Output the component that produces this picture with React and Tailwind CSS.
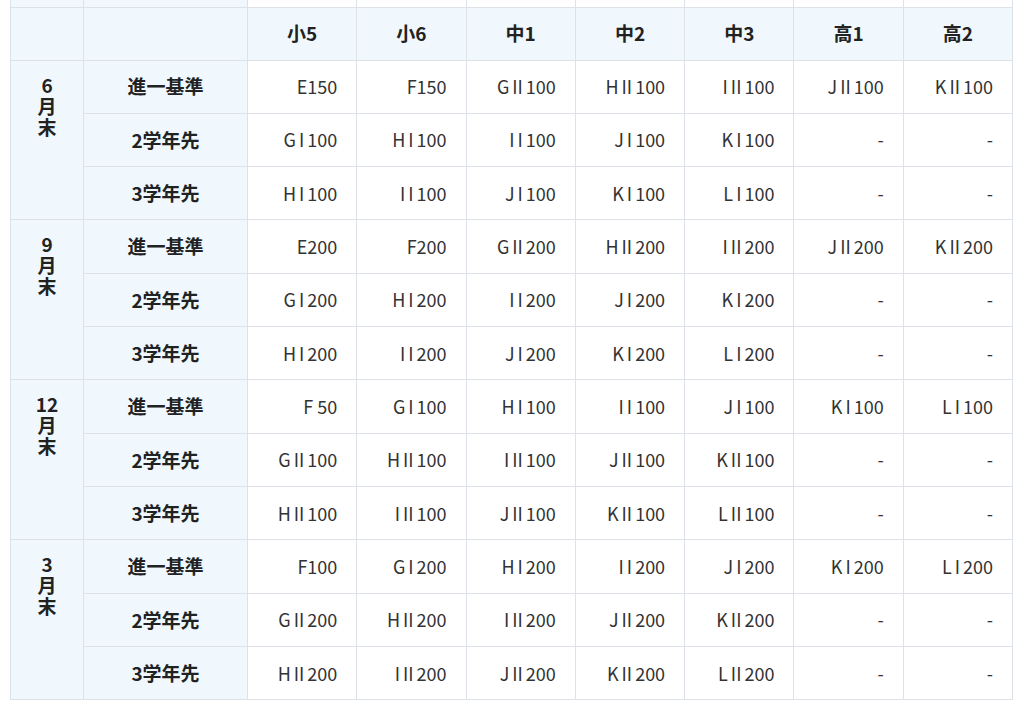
import React from "react";

const grades = ["小5", "小6", "中1", "中2", "中3", "高1", "高2"];

// month blocks, each with three rows; "|I|" / "|II|" mark the level numeral
const blocks = [
  {
    month: ["6", "月", "末"],
    rows: [
      ["進一基準", ["E150", "F150", "G|II|100", "H|II|100", "I|II|100", "J|II|100", "K|II|100"]],
      ["2学年先", ["G|I|100", "H|I|100", "I|I|100", "J|I|100", "K|I|100", "-", "-"]],
      ["3学年先", ["H|I|100", "I|I|100", "J|I|100", "K|I|100", "L|I|100", "-", "-"]],
    ],
  },
  {
    month: ["9", "月", "末"],
    rows: [
      ["進一基準", ["E200", "F200", "G|II|200", "H|II|200", "I|II|200", "J|II|200", "K|II|200"]],
      ["2学年先", ["G|I|200", "H|I|200", "I|I|200", "J|I|200", "K|I|200", "-", "-"]],
      ["3学年先", ["H|I|200", "I|I|200", "J|I|200", "K|I|200", "L|I|200", "-", "-"]],
    ],
  },
  {
    month: ["12", "月", "末"],
    rows: [
      ["進一基準", ["F 50", "G|I|100", "H|I|100", "I|I|100", "J|I|100", "K|I|100", "L|I|100"]],
      ["2学年先", ["G|II|100", "H|II|100", "I|II|100", "J|II|100", "K|II|100", "-", "-"]],
      ["3学年先", ["H|II|100", "I|II|100", "J|II|100", "K|II|100", "L|II|100", "-", "-"]],
    ],
  },
  {
    month: ["3", "月", "末"],
    rows: [
      ["進一基準", ["F100", "G|I|200", "H|I|200", "I|I|200", "J|I|200", "K|I|200", "L|I|200"]],
      ["2学年先", ["G|II|200", "H|II|200", "I|II|200", "J|II|200", "K|II|200", "-", "-"]],
      ["3学年先", ["H|II|200", "I|II|200", "J|II|200", "K|II|200", "L|II|200", "-", "-"]],
    ],
  },
];

const cell = "border border-[#dde2e8]";

function Value({ v }) {
  const parts = v.split("|");
  if (parts.length === 1) return v;
  const [letter, level, num] = parts;
  return (
    <>
      {letter}
      <span className="px-[3px]">{level}</span>
      {num}
    </>
  );
}

export default function App() {
  return (
    <div
      className="min-h-screen bg-white overflow-hidden"
      style={{ fontFamily: '"Noto Sans CJK JP", "Noto Sans", sans-serif' }}
    >
      <div className="pl-[10px] -mt-[2px]">
        <table className="w-[1003px] border-collapse table-fixed text-[18px] text-[#333]">
          <colgroup>
            <col className="w-[73px]" />
            <col className="w-[164px]" />
            {grades.map((g) => (
              <col key={g} />
            ))}
          </colgroup>
          <tbody>
            {/* tail of the row above, cut off by the scroll */}
            <tr className="h-[9px]">
              <td className={`${cell} border-t-0 bg-[#f0f8fd]`} />
              <td className={`${cell} border-t-0 bg-[#f0f8fd]`} />
              {grades.map((g) => (
                <td key={g} className={`${cell} border-t-0`} />
              ))}
            </tr>
            <tr className="h-[53px] bg-[#f0f8fd]">
              <th className={cell} />
              <th className={cell} />
              {grades.map((g) => (
                <th key={g} className={`${cell} text-center font-bold text-[19px] text-[#222]`}>
                  {g}
                </th>
              ))}
            </tr>
            {blocks.map((b) =>
              b.rows.map(([label, values], i) => (
                <tr key={b.month[0] + label} className="h-[53.33px]">
                  {i === 0 && (
                    <th
                      rowSpan={3}
                      className={`${cell} bg-[#f0f8fd] align-top pt-[13px] font-bold text-[19px] text-[#222] leading-[21px]`}
                    >
                      {b.month.map((m) => (
                        <div key={m}>{m}</div>
                      ))}
                    </th>
                  )}
                  <th className={`${cell} bg-[#f0f8fd] text-center font-bold text-[19px] text-[#222]`}>
                    {label}
                  </th>
                  {values.map((v, j) => (
                    <td key={j} className={`${cell} text-right pr-[19px] whitespace-pre`}>
                      <Value v={v} />
                    </td>
                  ))}
                </tr>
              ))
            )}
          </tbody>
        </table>
      </div>
    </div>
  );
}
